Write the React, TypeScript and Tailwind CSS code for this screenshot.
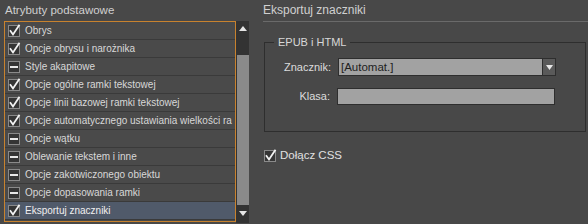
import React from "react";

type State = "check" | "mixed";
const rows: { label: string; state: State; selected?: boolean }[] = [
  { label: "Obrys", state: "check" },
  { label: "Opcje obrysu i narożnika", state: "check" },
  { label: "Style akapitowe", state: "mixed" },
  { label: "Opcje ogólne ramki tekstowej", state: "check" },
  { label: "Opcje linii bazowej ramki tekstowej", state: "check" },
  { label: "Opcje automatycznego ustawiania wielkości ra", state: "check" },
  { label: "Opcje wątku", state: "mixed" },
  { label: "Oblewanie tekstem i inne", state: "mixed" },
  { label: "Opcje zakotwiczonego obiektu", state: "mixed" },
  { label: "Opcje dopasowania ramki", state: "mixed" },
  { label: "Eksportuj znaczniki", state: "check", selected: true },
];

function Box({ state }: { state: State }) {
  return (
    <svg width="14" height="14" viewBox="0 0 14 14" className="shrink-0">
      <rect x="1.5" y="1.5" width="11" height="11" fill="#353535" stroke="#8a8a8a" strokeWidth="1" />
      {state === "check" ? (
        <path d="M3.5 7 L6 10.5 L12 1.5" fill="none" stroke="#f2f2f2" strokeWidth="1.8" strokeLinecap="square" />
      ) : (
        <rect x="3" y="6" width="8" height="2" fill="#e8e8e8" />
      )}
    </svg>
  );
}

export default function App() {
  return (
    <div
      className="w-[588px] h-[224px] bg-[#484848] flex text-[#dcdcdc] overflow-hidden"
      style={{ fontFamily: '"Liberation Sans", Arial, sans-serif' }}
    >
      <div className="w-[250px] pl-[4px] flex flex-col">
        <div className="h-[21px] text-[11.5px] leading-[21px] pl-[1px] text-[#d0d0d0]">Atrybuty podstawowe</div>
        <div className="flex h-[202px]">
          <div className="w-[232px] h-[201px] border border-[#c8822e] flex flex-col">
            {rows.map((r, i) => (
              <div
                key={i}
                className={`h-[18px] flex items-center gap-[4px] pl-[2px] border-b border-[#3a3a3a] text-[10px] whitespace-nowrap overflow-hidden ${
                  r.selected ? "bg-[#505a6a] text-[#f0f0f0]" : "bg-[#4a4a4a] text-[#d8d8d8]"
                }`}
              >
                <Box state={r.state} />
                <span>{r.label}</span>
              </div>
            ))}
          </div>
          <div className="w-[13px] h-[202px] bg-[#333333] flex flex-col items-center">
            <div className="h-[34px] pt-[5px]">
              <svg width="8" height="5" viewBox="0 0 8 5">
                <path d="M0 5 L4 0 L8 5 Z" fill="#e6e6e6" />
              </svg>
            </div>
            <div className="w-[12px] h-[150px] bg-[#8a8a8a]" />
            <div className="pt-[6px]">
              <svg width="8" height="5" viewBox="0 0 8 5">
                <path d="M0 0 L4 5 L8 0 Z" fill="#e6e6e6" />
              </svg>
            </div>
          </div>
        </div>
      </div>
      <div className="flex-1 pl-[13px] flex flex-col">
        <div className="h-[22px] text-[12px] leading-[21px] border-b border-[#6a6a6a] text-[#d0d0d0]">
          Eksportuj znaczniki
        </div>
        <fieldset className="mt-[13px] ml-[1px] w-[322px] h-[97px] border border-[#2e2e2e]">
          <legend className="ml-[9px] px-[4px] text-[11px] leading-[14px] text-[#d8d8d8]">EPUB i HTML</legend>
          <div className="flex items-center h-[18px] mt-[9px]">
            <div className="w-[66px] text-right text-[11px]">Znacznik:</div>
            <div className="ml-[7px] w-[218px] h-[18px] bg-[#a2a2a2] border border-[#2e2e2e] flex">
              <div className="flex-1 text-[11.5px] leading-[16px] text-[#1e1e1e] pl-[2px]">[Automat.]</div>
              <div className="w-[13px] h-full bg-[#5a5a5a] border-l border-[#2e2e2e] flex items-center justify-center">
                <svg width="7" height="5" viewBox="0 0 7 5">
                  <path d="M0 0 L3.5 5 L7 0 Z" fill="#e8e8e8" />
                </svg>
              </div>
            </div>
          </div>
          <div className="flex items-center h-[17px] mt-[12px]">
            <div className="w-[66px] text-right text-[11px] pr-[1px]">Klasa:</div>
            <div className="ml-[6px] w-[218px] h-[17px] bg-[#a2a2a2] border border-[#2e2e2e]" />
          </div>
        </fieldset>
        <div className="mt-[15px] flex items-center gap-[3px]">
          <Box state="check" />
          <span className="text-[11.5px] text-[#e0e0e0]">Dołącz CSS</span>
        </div>
      </div>
    </div>
  );
}
